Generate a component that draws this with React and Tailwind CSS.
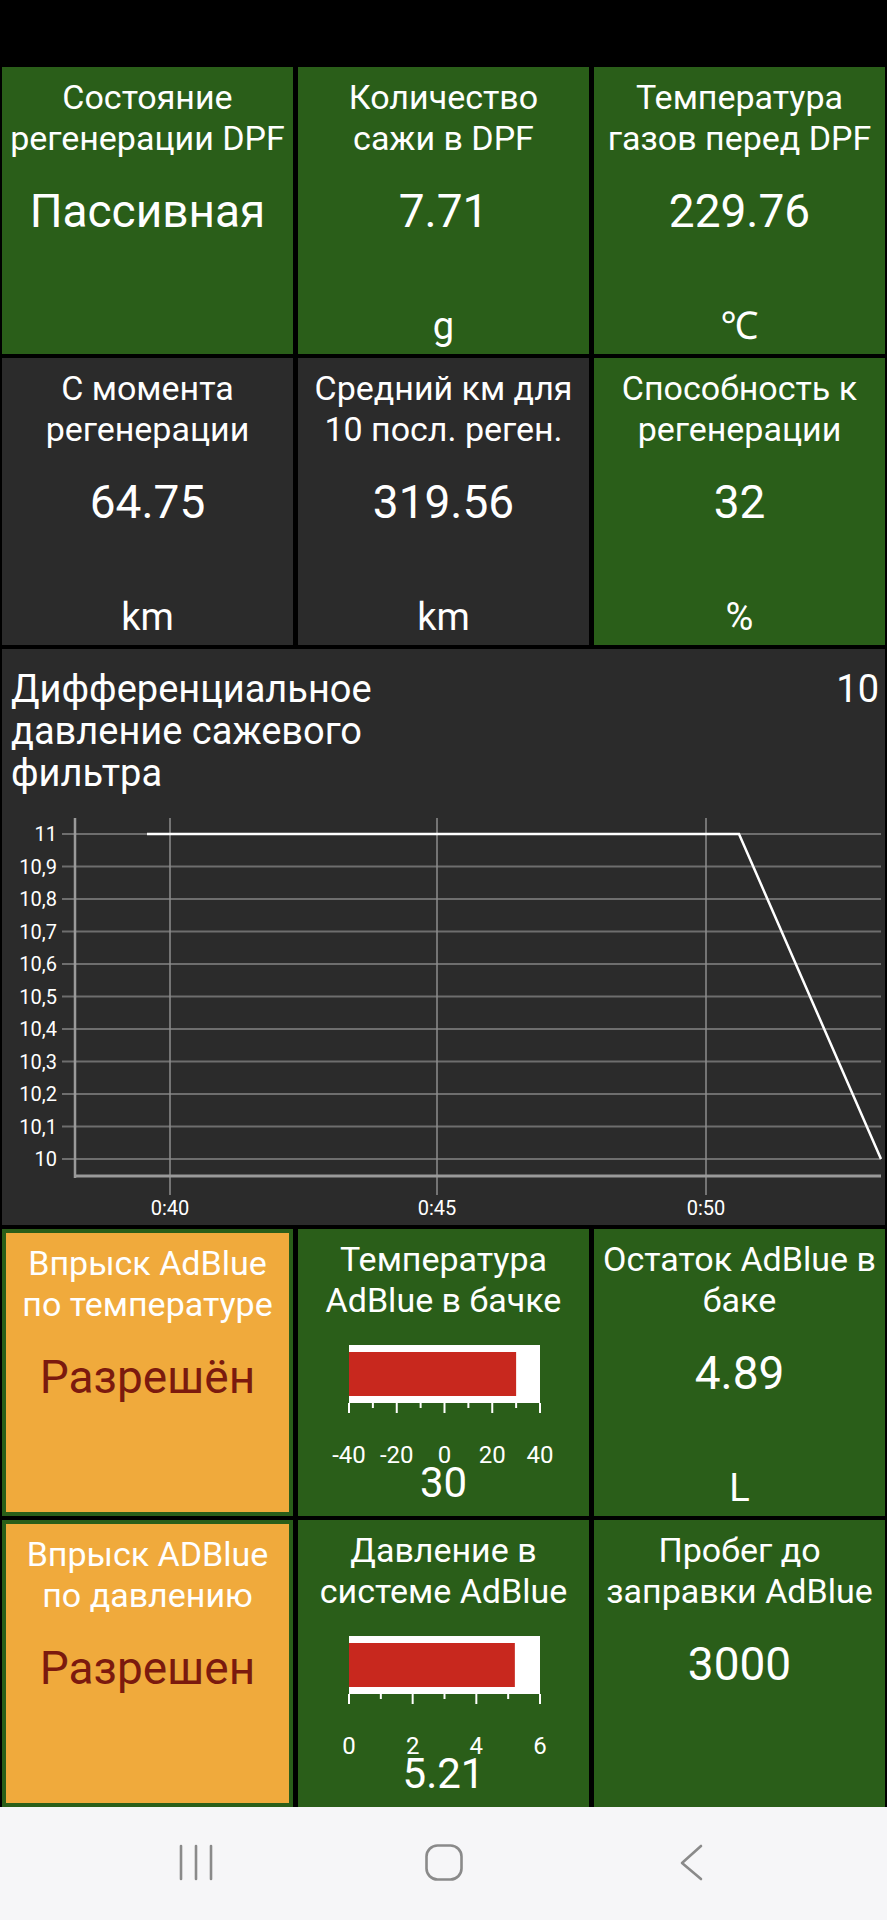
import React from 'react';

const font = { fontFamily: 'Roboto, "Noto Sans", Arial, sans-serif' };

function Tile({ lines, value, unit, tone = 'green', valueClass = 'text-white', children }) {
  const bg = tone === 'gray' ? 'bg-[#2b2b2b]' : 'bg-[#2a5e19]';
  const body = (
    <div className="flex h-full flex-col items-center">
      <div className="pt-[10px] text-center text-[34px] leading-[41px] text-white">
        {lines.map((l) => (
          <div key={l} className="whitespace-nowrap">{l}</div>
        ))}
      </div>
      {children ? (
        children
      ) : (
        <div className={`mt-[26px] text-[46px] leading-[52px] ${valueClass}`}>{value}</div>
      )}
      {unit && <div className="mt-auto pb-[8px] text-[38px] leading-[40px] text-white">{unit}</div>}
    </div>
  );
  if (tone === 'orange') {
    return (
      <div className="h-[287px] bg-[#2a5e19] p-[4px]">
        <div className="h-full bg-[#f0aa3c]">{body}</div>
      </div>
    );
  }
  return <div className={`h-[287px] ${bg}`}>{body}</div>;
}

function Gauge({ min, max, value, step, major, labels, display }) {
  const w = 191;
  const x0 = 25;
  const fill = ((value - min) / (max - min)) * w;
  const ticks = [];
  for (let v = min; v <= max + 0.001; v += step) ticks.push(v);
  return (
    <div className="mt-[24px] flex flex-col items-center">
      <svg width="240" height="124" viewBox="0 0 240 124">
        <rect x={x0} y="0" width={w} height="58" fill="#ffffff" />
        <rect x={x0} y="7" width={fill} height="44" fill="#c8281e" />
        {ticks.map((v, i) => {
          const x = x0 + ((v - min) / (max - min)) * w;
          const isMajor = Math.round((v - min) / step) % major === 0;
          return <line key={i} x1={x} y1="58" x2={x} y2={isMajor ? 68 : 63} stroke="#ffffff" strokeWidth="2" />;
        })}
        {labels.map((v) => {
          const x = x0 + ((v - min) / (max - min)) * w;
          return (
            <text key={v} x={x} y="118" textAnchor="middle" fill="#ffffff" fontSize="24" style={font}>
              {v}
            </text>
          );
        })}
      </svg>
      <div className="mt-[-6px] text-[42px] leading-[40px] text-white">{display}</div>
    </div>
  );
}

function Chart() {
  const yTicks = [11, 10.9, 10.8, 10.7, 10.6, 10.5, 10.4, 10.3, 10.2, 10.1, 10];
  const yOf = (v) => 40 + (11 - v) * 325;
  const xs = [
    { x: 168, l: '0:40' },
    { x: 435, l: '0:45' },
    { x: 704, l: '0:50' },
  ];
  return (
    <svg width="883" height="432" viewBox="0 0 883 432" className="block">
      {yTicks.map((v) => (
        <g key={v}>
          <line x1="60" y1={yOf(v)} x2="879" y2={yOf(v)} stroke="#6e6e6e" strokeWidth="2" />
          <text x="55" y={yOf(v) + 7} textAnchor="end" fill="#ffffff" fontSize="20" style={font}>
            {String(Math.round(v * 10) / 10).replace('.', ',')}
          </text>
        </g>
      ))}
      {xs.map((t) => (
        <g key={t.l}>
          <line x1={t.x} y1="24" x2={t.x} y2="401" stroke="#8e8e8e" strokeWidth="1.5" />
          <text x={t.x} y="421" textAnchor="middle" fill="#ffffff" fontSize="20" style={font}>
            {t.l}
          </text>
        </g>
      ))}
      <line x1="73" y1="24" x2="73" y2="384" stroke="#9a9a9a" strokeWidth="2.5" />
      <line x1="73" y1="382" x2="879" y2="382" stroke="#9a9a9a" strokeWidth="3" />
      <polyline points="145,40 737,40 879,365" fill="none" stroke="#ffffff" strokeWidth="2.5" />
    </svg>
  );
}

export default function App() {
  return (
    <div className="w-[887px] bg-black" style={font}>
      <div className="h-[67px]" />
      <div className="flex flex-col gap-[4px] px-[2px]">
        <div className="grid grid-cols-3 gap-[5px]">
          <Tile lines={['Состояние', 'регенерации DPF']} value="Пассивная" />
          <Tile lines={['Количество', 'сажи в DPF']} value="7.71" unit="g" />
          <Tile lines={['Температура', 'газов перед DPF']} value="229.76" unit="℃" />
        </div>
        <div className="grid grid-cols-3 gap-[5px]">
          <Tile tone="gray" lines={['С момента', 'регенерации']} value="64.75" unit="km" />
          <Tile tone="gray" lines={['Средний км для', '10 посл. реген.']} value="319.56" unit="km" />
          <Tile lines={['Способность к', 'регенерации']} value="32" unit="%" />
        </div>
        <div className="h-[576px] bg-[#2b2b2b] text-white">
          <div className="flex items-start justify-between pl-[9px] pr-[6px] pt-[19px] text-[38px] leading-[42px]">
            <div className="w-[400px]">Дифференциальное давление сажевого фильтра</div>
            <div>10</div>
          </div>
          <Chart />
        </div>
        <div className="grid grid-cols-3 gap-[5px]">
          <Tile tone="orange" lines={['Впрыск AdBlue', 'по температуре']} value="Разрешён" valueClass="text-[#7b1a0e]" />
          <Tile lines={['Температура', 'AdBlue в бачке']}>
            <Gauge min={-40} max={40} value={30} step={10} major={2} labels={[-40, -20, 0, 20, 40]} display="30" />
          </Tile>
          <Tile lines={['Остаток AdBlue в', 'баке']} value="4.89" unit="L" />
        </div>
        <div className="grid grid-cols-3 gap-[5px]">
          <Tile tone="orange" lines={['Впрыск ADBlue', 'по давлению']} value="Разрешен" valueClass="text-[#7b1a0e]" />
          <Tile lines={['Давление в', 'системе AdBlue']}>
            <Gauge min={0} max={6} value={5.21} step={1} major={2} labels={[0, 2, 4, 6]} display="5.21" />
          </Tile>
          <Tile lines={['Пробег до', 'заправки AdBlue']} value="3000" />
        </div>
      </div>
      <div className="flex h-[113px] justify-center bg-[#f6f6f8] pt-[37px]">
        <div className="flex w-[248px] justify-center">
          <svg width="36" height="38" viewBox="0 0 36 38">
            <g stroke="#8a8a8a" strokeWidth="2.6" strokeLinecap="round">
              <line x1="3" y1="2" x2="3" y2="35" />
              <line x1="18" y1="2" x2="18" y2="35" />
              <line x1="33" y1="2" x2="33" y2="35" />
            </g>
          </svg>
        </div>
        <div className="flex w-[248px] justify-center">
          <svg width="38" height="38" viewBox="0 0 38 38">
            <rect x="1.5" y="1.5" width="35" height="34" rx="11" fill="none" stroke="#8a8a8a" strokeWidth="2.6" />
          </svg>
        </div>
        <div className="flex w-[248px] justify-center">
          <svg width="24" height="38" viewBox="0 0 24 38">
            <polyline points="21,2 2,19 21,35" fill="none" stroke="#8a8a8a" strokeWidth="2.6" strokeLinecap="round" strokeLinejoin="round" />
          </svg>
        </div>
      </div>
    </div>
  );
}
